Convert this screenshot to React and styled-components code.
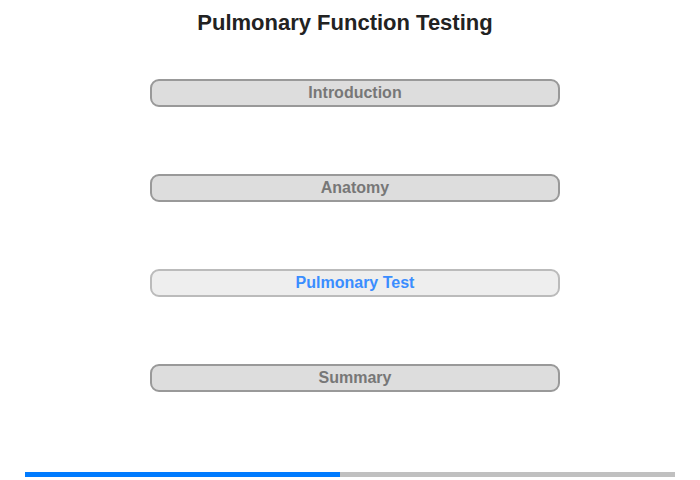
import React from 'react';
import styled, {createGlobalStyle} from "styled-components";

const GlobalStyle = createGlobalStyle`
    body {
        margin: 0;
        background: white;
        font-family: "Liberation Sans", Arial, sans-serif;
    }
`;

const Page = styled.div`
    width: 700px;
    height: 480px;
    position: relative;
    box-sizing: border-box;
    padding-top: 10px;
    display: flex;
    flex-direction: column;
`;

const Title = styled.h1`
    margin: 0 0 0 -10px;
    text-align: center;
    font-size: 22px;
    line-height: 26px;
    font-weight: bold;
    color: #222;
`;

const Menu = styled.div`
    margin-top: 43px;
    display: flex;
    flex-direction: column;
    align-items: center;
    gap: 67px;
    padding-left: 10px;
`;

const MenuButton = styled.div`
    width: 410px;
    height: 28px;
    box-sizing: border-box;
    border-radius: 9px;
    border: 2px solid ${({active}) => active ? '#bbb' : '#999'};
    background: ${({active}) => active ? '#eee' : '#ddd'};
    color: ${({active}) => active ? '#3a8dff' : '#777'};
    font-size: 16px;
    font-weight: bold;
    display: flex;
    align-items: center;
    justify-content: center;
`;

const Progress = styled.div`
    position: absolute;
    left: 25px;
    top: 472px;
    width: 650px;
    height: 5px;
    background: #c0c0c0;
`;

const ProgressFill = styled.div`
    height: 100%;
    background: #007bff;
`;

const items = ['Introduction', 'Anatomy', 'Pulmonary Test', 'Summary'];

function App() {
    const current = 2;
    return (
        <>
            <GlobalStyle/>
            <Page>
                <Title>Pulmonary Function Testing</Title>
                <Menu>
                    {items.map((item, i) => (
                        <MenuButton key={item} active={i === current}>{item}</MenuButton>
                    ))}
                </Menu>
                <Progress>
                    <ProgressFill style={{width: '315px'}}/>
                </Progress>
            </Page>
        </>
    );
}

export default App;
